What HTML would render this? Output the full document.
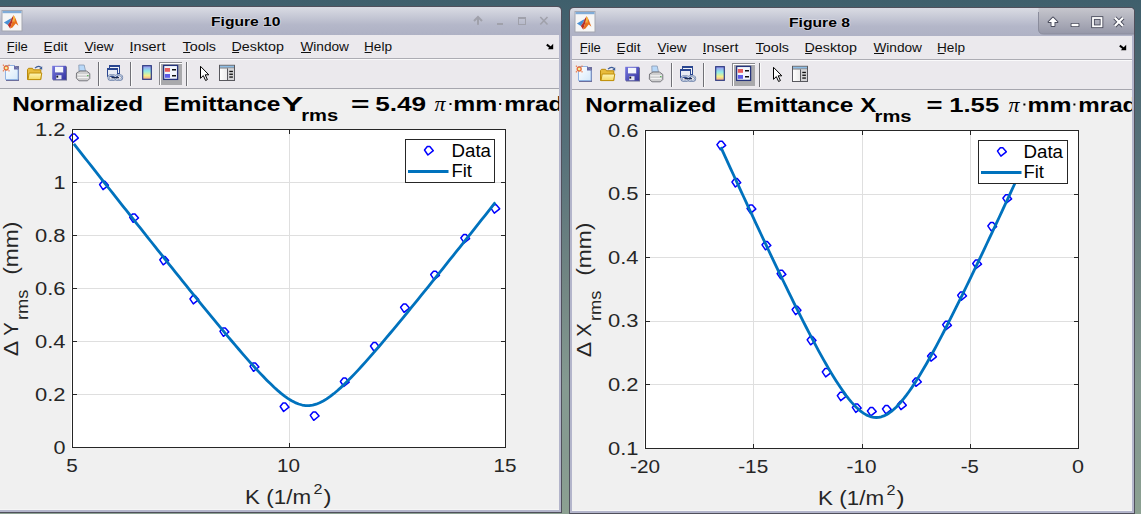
<!DOCTYPE html><html><head><meta charset="utf-8"><style>html,body{margin:0;padding:0;width:1141px;height:514px;overflow:hidden;background:#5a7a78;}svg{display:block}</style></head><body>
<svg width="1141" height="514" viewBox="0 0 1141 514">
<defs><linearGradient id="desk" x1="0" y1="0" x2="0" y2="1"><stop offset="0" stop-color="#3f5f6c"/><stop offset="0.12" stop-color="#4a6670"/><stop offset="0.3" stop-color="#57717a"/><stop offset="0.55" stop-color="#728683"/><stop offset="0.75" stop-color="#859a91"/><stop offset="0.88" stop-color="#869a90"/><stop offset="1" stop-color="#8ca192"/></linearGradient></defs>
<rect width="1141" height="514" fill="url(#desk)"/>
<path d="M-10 513 L-10 11 Q-10 6 -5 6 L557 6 Q562 6 562 11 L562 513 Z" fill="#50505c"/>
<defs><linearGradient id="tg0" x1="0" y1="0" x2="0" y2="1"><stop offset="0" stop-color="#dadbe4"/><stop offset="0.08" stop-color="#d5d7e0"/><stop offset="0.62" stop-color="#b4b7c9"/><stop offset="1" stop-color="#aeb1c4"/></linearGradient></defs>
<path d="M-9 36 L-9 11 Q-9 7 -5 7 L557 7 Q561 7 561 11 L561 36 Z" fill="url(#tg0)"/>
<rect x="-9" y="35" width="570" height="477" fill="#b3b5cb"/>
<rect x="-10" y="35" width="569" height="54" fill="#ebe9ed"/>
<rect x="-10" y="58" width="569" height="1" fill="#acacb3"/>
<rect x="-10" y="59" width="569" height="1" fill="#fafafb"/>
<rect x="-10" y="88" width="569" height="1" fill="#a6a6ae"/>
<rect x="-10" y="89" width="569" height="421" fill="#f0f0f0"/>
<rect x="-10" y="509" width="569" height="1" fill="#f6f6f6"/>
<g transform="translate(1.5,10)">
<rect x="0.5" y="0.5" width="20" height="20.5" fill="#f6f6f6" stroke="#a4a6b0" stroke-width="1"/>
<rect x="1" y="1" width="19" height="2.2" fill="#80acd8"/>
<path d="M2.4 12.6 L7.5 9.6 L10.2 7.9 L8.8 11.5 L6.3 14.9 Z" fill="#4a90d4"/>
<path d="M6.3 14.9 L8.8 11.5 L10.2 7.9 L12.1 5.2 L11.2 10.5 L8.6 18.4 Z" fill="#b8302a"/>
<path d="M12.1 5.2 L14.2 8.8 L16.9 15.8 L14.2 13.6 L11 17.6 L8.6 18.4 L11.2 10.5 Z" fill="#e8701e"/>
<path d="M12.1 5.2 L13.6 7.8 L12.8 12.4 L11.2 10.5 Z" fill="#f6b840"/>
</g>
<text x="211" y="25.5" font-family='"Liberation Sans", sans-serif' font-size="12.2" font-weight="bold" fill="#000" textLength="69.5" lengthAdjust="spacingAndGlyphs" style="paint-order:stroke" stroke="rgba(255,255,255,0.35)" stroke-width="1.5">Figure 10</text>
<path d="M474 21 L478 17 L482 21" fill="none" stroke="#a0a1ab" stroke-width="2"/>
<rect x="477" y="18" width="2" height="6.8" fill="#a0a1ab"/>
<rect x="497" y="23" width="6" height="2" fill="#a0a1ab"/>
<rect x="518.5" y="17.5" width="7" height="7" fill="none" stroke="#a0a1ab" stroke-width="1"/>
<rect x="518" y="17" width="8" height="2" fill="#a0a1ab"/>
<path d="M540.3 17 L547.5 24.5 M547.5 17 L540.3 24.5" stroke="#a0a1ab" stroke-width="1.6"/>
<text x="6.800000000000001" y="50.9" font-family='"Liberation Sans", sans-serif' font-size="12.3" font-weight="normal" text-anchor="start" fill="#101010" textLength="21.0" lengthAdjust="spacingAndGlyphs" >File</text>
<rect x="7.4" y="52" width="7" height="1" fill="#101010"/>
<text x="43.6" y="50.9" font-family='"Liberation Sans", sans-serif' font-size="12.3" font-weight="normal" text-anchor="start" fill="#101010" textLength="24.0" lengthAdjust="spacingAndGlyphs" >Edit</text>
<rect x="44.2" y="52" width="7" height="1" fill="#101010"/>
<text x="84.4" y="50.9" font-family='"Liberation Sans", sans-serif' font-size="12.3" font-weight="normal" text-anchor="start" fill="#101010" textLength="29.2" lengthAdjust="spacingAndGlyphs" >View</text>
<rect x="85" y="52" width="7" height="1" fill="#101010"/>
<text x="129.4" y="50.9" font-family='"Liberation Sans", sans-serif' font-size="12.3" font-weight="normal" text-anchor="start" fill="#101010" textLength="36.0" lengthAdjust="spacingAndGlyphs" >Insert</text>
<rect x="130" y="52" width="3" height="1" fill="#101010"/>
<text x="182.5" y="50.9" font-family='"Liberation Sans", sans-serif' font-size="12.3" font-weight="normal" text-anchor="start" fill="#101010" textLength="33.5" lengthAdjust="spacingAndGlyphs" >Tools</text>
<rect x="183.1" y="52" width="7" height="1" fill="#101010"/>
<text x="231.5" y="50.9" font-family='"Liberation Sans", sans-serif' font-size="12.3" font-weight="normal" text-anchor="start" fill="#101010" textLength="52.4" lengthAdjust="spacingAndGlyphs" >Desktop</text>
<rect x="232.1" y="52" width="7" height="1" fill="#101010"/>
<text x="300.4" y="50.9" font-family='"Liberation Sans", sans-serif' font-size="12.3" font-weight="normal" text-anchor="start" fill="#101010" textLength="48.6" lengthAdjust="spacingAndGlyphs" >Window</text>
<rect x="301" y="52" width="10" height="1" fill="#101010"/>
<text x="364.0" y="50.9" font-family='"Liberation Sans", sans-serif' font-size="12.3" font-weight="normal" text-anchor="start" fill="#101010" textLength="28.0" lengthAdjust="spacingAndGlyphs" >Help</text>
<rect x="364.6" y="52" width="7" height="1" fill="#101010"/>
<path d="M546.8 44.6 L551.5 48.3" stroke="#000" stroke-width="2"/><path d="M553.2 43.8 L553.2 49.2 L547.8 49.2 Z" fill="#000"/>
<g transform="translate(0,0)">
<defs><linearGradient id="pg" x1="0" y1="0" x2="1" y2="1"><stop offset="0" stop-color="#ffffff"/><stop offset="1" stop-color="#d4e8fa"/></linearGradient><linearGradient id="fg" x1="0" y1="0" x2="0" y2="1"><stop offset="0" stop-color="#fff6b8"/><stop offset="1" stop-color="#f4d860"/></linearGradient><linearGradient id="flg" x1="0" y1="0" x2="1" y2="1"><stop offset="0" stop-color="#7878e0"/><stop offset="1" stop-color="#3434a0"/></linearGradient><linearGradient id="cbg" x1="0" y1="0" x2="0" y2="1"><stop offset="0" stop-color="#9890f0"/><stop offset="0.4" stop-color="#90ece8"/><stop offset="0.72" stop-color="#f4f088"/><stop offset="1" stop-color="#f8a890"/></linearGradient><linearGradient id="peg" x1="0" y1="0" x2="1" y2="0"><stop offset="0" stop-color="#ffffff"/><stop offset="1" stop-color="#d8d8d8"/></linearGradient></defs>
<rect x="6" y="66" width="13" height="15" fill="#6c6e9c"/>
<path d="M5.5 65.5 L14 65.5 L18 69.5 L18 79.5 L5.5 79.5 Z" fill="url(#pg)" stroke="#90b4e4" stroke-width="1"/>
<path d="M14 65 L18.5 69.5 L14 69.5 Z" fill="#6a6aa8"/>
<circle cx="6.2" cy="68" r="2" fill="#f0f09a" stroke="#e86e3c" stroke-width="1.3"/>
<g fill="#e86e3c"><rect x="2.8" y="64.6" width="1.2" height="1.2"/><rect x="8.4" y="64.6" width="1.2" height="1.2"/><rect x="2.8" y="70.2" width="1.2" height="1.2"/><rect x="8.4" y="70.2" width="1.2" height="1.2"/></g>
<path d="M27.5 79.5 L27.5 69.5 L28.5 68.3 L32.5 68.3 L33.5 69.8 L40.8 69.8 L40.8 79.5 Z" fill="#e8bc3c" stroke="#b8880c" stroke-width="1"/>
<path d="M28 79.6 L29.2 73 L41.8 73 L40.6 79.6 Z" fill="url(#fg)" stroke="#c0900c" stroke-width="1"/>
<path d="M35 68.2 Q38 65.2 40.8 67.2" fill="none" stroke="#3c5c98" stroke-width="1.2"/><path d="M39.3 68.6 L42.2 66.2 L42.2 69.8 Z" fill="#3c5c98"/>
<rect x="53" y="66.5" width="14" height="14" fill="#4a4c7a" opacity="0.8"/>
<rect x="52.2" y="65.8" width="13.8" height="13.8" fill="url(#flg)"/>
<rect x="55" y="66.8" width="8.2" height="6.3" fill="#f4f6fc"/><rect x="55" y="72.5" width="8.2" height="0.8" fill="#3838a0"/>
<rect x="56.2" y="75.2" width="5.3" height="4" fill="#e8e8f0"/><rect x="56.4" y="75.6" width="1.8" height="2" fill="#101020"/>
<path d="M78.8 65 L84.2 65 L85.5 71 L79 71 Z" fill="#b8d8f8" stroke="#8898b0" stroke-width="0.8"/>
<path d="M76.5 73 L80 71 L86.5 71 L89.8 73.5 L89.8 78.5 L87.5 80.8 L79 80.8 L76.3 78.2 Z" fill="#cfcfd0" stroke="#6e6e74" stroke-width="0.9"/>
<path d="M77.5 74.8 L88.8 74.8 M77.5 77.6 L88.6 77.6" stroke="#f8f8f8" stroke-width="1"/><rect x="87.2" y="75" width="1.2" height="1.2" fill="#40b040"/>
<rect x="98.0" y="62" width="1" height="24" fill="#707076"/><rect x="99.0" y="62" width="1" height="24" fill="#fafafa"/>
<rect x="130.0" y="62" width="1" height="24" fill="#707076"/><rect x="131.0" y="62" width="1" height="24" fill="#fafafa"/>
<rect x="186.0" y="62" width="1" height="24" fill="#707076"/><rect x="187.0" y="62" width="1" height="24" fill="#fafafa"/>
<rect x="109.5" y="65.5" width="10" height="8" fill="#f2f4f8" stroke="#2a4690" stroke-width="1"/><rect x="109" y="65" width="11" height="2" fill="#2a4690"/>
<rect x="107.5" y="68.5" width="10" height="8" fill="#e8ecf4" stroke="#2a4690" stroke-width="1"/><rect x="107" y="68" width="11" height="2" fill="#2a4690"/>
<ellipse cx="112" cy="77.4" rx="3.6" ry="2.5" fill="none" stroke="#6c80a8" stroke-width="2"/><ellipse cx="118.6" cy="77.4" rx="3.6" ry="2.5" fill="none" stroke="#6c80a8" stroke-width="2"/>
<ellipse cx="112" cy="77.4" rx="3.6" ry="2.5" fill="none" stroke="#e4ecf8" stroke-width="0.7"/><ellipse cx="118.6" cy="77.4" rx="3.6" ry="2.5" fill="none" stroke="#e4ecf8" stroke-width="0.7"/>
<path d="M111.5 77.6 L119 77.6" stroke="#1a2a50" stroke-width="1.3"/>
<rect x="142.7" y="65.7" width="8.6" height="13.6" fill="url(#cbg)" stroke="#2c3880" stroke-width="1.2"/>
<rect x="159" y="62" width="23" height="23" fill="#ffffff"/>
<rect x="159" y="62" width="23" height="1" fill="#8a8a8e"/><rect x="159" y="62" width="1" height="23" fill="#8a8a8e"/>
<rect x="161" y="64" width="21" height="21" fill="#a9a9ac"/>
<rect x="163.6" y="65.4" width="14" height="14" fill="#f2f6fc" stroke="#26347c" stroke-width="1.3"/>
<rect x="164.8" y="68" width="5.2" height="3.8" fill="#e85c5c"/><rect x="172" y="69" width="4" height="1.5" fill="#101010"/>
<rect x="164.8" y="74" width="5.2" height="3.8" fill="#5c5ce8"/><rect x="172" y="75" width="4" height="1.5" fill="#101010"/>
<path d="M200.5 66.3 L200.5 78.3 L203.3 75.6 L205.6 80.5 L207.4 79.6 L205.2 74.8 L208.8 74.8 Z" fill="#fff" stroke="#000" stroke-width="1"/>
<rect x="219.5" y="65.3" width="15" height="15.2" fill="url(#peg)" stroke="#58585e" stroke-width="1"/>
<rect x="220" y="65.8" width="14" height="1.8" fill="#8cbce4"/><rect x="220" y="67.6" width="14" height="0.8" fill="#58585e"/>
<rect x="227.5" y="68.4" width="6.5" height="11.6" fill="#d4d4d6"/><rect x="227" y="68.4" width="1" height="12" fill="#58585e"/>
<rect x="229.3" y="70.8" width="3.6" height="1.3" fill="#101010"/><rect x="229.3" y="73.6" width="3.6" height="1.3" fill="#101010"/><rect x="229.3" y="76.4" width="3.6" height="1.3" fill="#101010"/>
</g>
<defs><clipPath id="clip0"><rect x="0" y="89" width="559" height="421"/></clipPath></defs>
<g clip-path="url(#clip0)">
<rect x="71" y="129" width="435" height="319" fill="#fff"/>
<path d="M289.5 134 L289.5 443" stroke="#dfdfdf" stroke-width="1" shape-rendering="crispEdges"/>
<path d="M77 394.5 L501 394.5" stroke="#dfdfdf" stroke-width="1" shape-rendering="crispEdges"/>
<path d="M77 341.5 L501 341.5" stroke="#dfdfdf" stroke-width="1" shape-rendering="crispEdges"/>
<path d="M77 288.5 L501 288.5" stroke="#dfdfdf" stroke-width="1" shape-rendering="crispEdges"/>
<path d="M77 235.5 L501 235.5" stroke="#dfdfdf" stroke-width="1" shape-rendering="crispEdges"/>
<path d="M77 182.5 L501 182.5" stroke="#dfdfdf" stroke-width="1" shape-rendering="crispEdges"/>
<path d="M72.30 134.00 L74.80 134.00 L78.30 138.10 L72.90 142.40 L69.50 137.40 Z" fill="none" stroke="#0000ff" stroke-width="1.5" stroke-linejoin="round"/>
<path d="M102.40 181.20 L104.90 181.20 L108.40 185.30 L103.00 189.60 L99.60 184.60 Z" fill="none" stroke="#0000ff" stroke-width="1.5" stroke-linejoin="round"/>
<path d="M132.50 213.90 L135.00 213.90 L138.50 218.00 L133.10 222.30 L129.70 217.30 Z" fill="none" stroke="#0000ff" stroke-width="1.5" stroke-linejoin="round"/>
<path d="M162.60 256.40 L165.10 256.40 L168.60 260.50 L163.20 264.80 L159.80 259.80 Z" fill="none" stroke="#0000ff" stroke-width="1.5" stroke-linejoin="round"/>
<path d="M192.70 295.50 L195.20 295.50 L198.70 299.60 L193.30 303.90 L189.90 298.90 Z" fill="none" stroke="#0000ff" stroke-width="1.5" stroke-linejoin="round"/>
<path d="M222.80 327.90 L225.30 327.90 L228.80 332.00 L223.40 336.30 L220.00 331.30 Z" fill="none" stroke="#0000ff" stroke-width="1.5" stroke-linejoin="round"/>
<path d="M252.90 362.90 L255.40 362.90 L258.90 367.00 L253.50 371.30 L250.10 366.30 Z" fill="none" stroke="#0000ff" stroke-width="1.5" stroke-linejoin="round"/>
<path d="M283.00 403.10 L285.50 403.10 L289.00 407.20 L283.60 411.50 L280.20 406.50 Z" fill="none" stroke="#0000ff" stroke-width="1.5" stroke-linejoin="round"/>
<path d="M313.10 411.90 L315.60 411.90 L319.10 416.00 L313.70 420.30 L310.30 415.30 Z" fill="none" stroke="#0000ff" stroke-width="1.5" stroke-linejoin="round"/>
<path d="M343.20 378.10 L345.70 378.10 L349.20 382.20 L343.80 386.50 L340.40 381.50 Z" fill="none" stroke="#0000ff" stroke-width="1.5" stroke-linejoin="round"/>
<path d="M373.30 342.60 L375.80 342.60 L379.30 346.70 L373.90 351.00 L370.50 346.00 Z" fill="none" stroke="#0000ff" stroke-width="1.5" stroke-linejoin="round"/>
<path d="M403.40 303.90 L405.90 303.90 L409.40 308.00 L404.00 312.30 L400.60 307.30 Z" fill="none" stroke="#0000ff" stroke-width="1.5" stroke-linejoin="round"/>
<path d="M433.50 271.20 L436.00 271.20 L439.50 275.30 L434.10 279.60 L430.70 274.60 Z" fill="none" stroke="#0000ff" stroke-width="1.5" stroke-linejoin="round"/>
<path d="M463.60 234.50 L466.10 234.50 L469.60 238.60 L464.20 242.90 L460.80 237.90 Z" fill="none" stroke="#0000ff" stroke-width="1.5" stroke-linejoin="round"/>
<path d="M493.70 204.70 L496.20 204.70 L499.70 208.80 L494.30 213.10 L490.90 208.10 Z" fill="none" stroke="#0000ff" stroke-width="1.5" stroke-linejoin="round"/>
<path d="M73.90 143.89 L77.41 148.36 L80.92 152.83 L84.43 157.29 L87.95 161.75 L91.46 166.22 L94.97 170.68 L98.48 175.14 L101.99 179.59 L105.50 184.05 L109.02 188.50 L112.53 192.95 L116.04 197.40 L119.55 201.85 L123.06 206.30 L126.58 210.74 L130.09 215.18 L133.60 219.61 L137.11 224.05 L140.62 228.48 L144.13 232.91 L147.65 237.33 L151.16 241.75 L154.67 246.17 L158.18 250.58 L161.69 254.98 L165.20 259.39 L168.72 263.78 L172.23 268.17 L175.74 272.56 L179.25 276.94 L182.76 281.31 L186.27 285.67 L189.78 290.03 L193.30 294.37 L196.81 298.71 L200.32 303.04 L203.83 307.35 L207.34 311.65 L210.85 315.94 L214.37 320.21 L217.88 324.47 L221.39 328.70 L224.90 332.92 L228.41 337.11 L231.93 341.27 L235.44 345.41 L238.95 349.51 L242.46 353.57 L245.97 357.60 L249.48 361.57 L253.00 365.48 L256.51 369.34 L260.02 373.11 L263.53 376.81 L267.04 380.40 L270.55 383.87 L274.07 387.20 L277.58 390.37 L281.09 393.35 L284.60 396.10 L288.11 398.58 L291.62 400.76 L295.13 402.59 L298.65 404.02 L302.16 405.01 L305.67 405.53 L309.18 405.56 L312.69 405.10 L316.21 404.18 L319.72 402.81 L323.23 401.03 L326.74 398.90 L330.25 396.45 L333.76 393.73 L337.28 390.79 L340.79 387.64 L344.30 384.33 L347.81 380.87 L351.32 377.30 L354.83 373.62 L358.35 369.86 L361.86 366.01 L365.37 362.10 L368.88 358.14 L372.39 354.12 L375.90 350.07 L379.42 345.97 L382.93 341.84 L386.44 337.68 L389.95 333.49 L393.46 329.28 L396.97 325.04 L400.49 320.79 L404.00 316.52 L407.51 312.24 L411.02 307.94 L414.53 303.62 L418.04 299.30 L421.56 294.97 L425.07 290.62 L428.58 286.27 L432.09 281.90 L435.60 277.53 L439.11 273.16 L442.63 268.77 L446.14 264.38 L449.65 259.98 L453.16 255.58 L456.67 251.18 L460.18 246.77 L463.70 242.35 L467.21 237.93 L470.72 233.51 L474.23 229.08 L477.74 224.65 L481.25 220.22 L484.77 215.78 L488.28 211.34 L491.79 206.90 L495.30 202.46" fill="none" stroke="#0072bd" stroke-width="2.8" stroke-linejoin="round"/>
<path d="M72.5 129.5 L505.5 129.5 L505.5 447.5 L72.5 447.5 Z" fill="none" stroke="#262626" stroke-width="1" shape-rendering="crispEdges"/>
<path d="M72.5 447 L72.5 443 M72.5 130 L72.5 134" stroke="#262626" stroke-width="1" shape-rendering="crispEdges"/>
<path d="M289.5 447 L289.5 443 M289.5 130 L289.5 134" stroke="#262626" stroke-width="1" shape-rendering="crispEdges"/>
<path d="M505.5 447 L505.5 443 M505.5 130 L505.5 134" stroke="#262626" stroke-width="1" shape-rendering="crispEdges"/>
<path d="M73 447.5 L77 447.5 M505 447.5 L501 447.5" stroke="#262626" stroke-width="1" shape-rendering="crispEdges"/>
<path d="M73 394.5 L77 394.5 M505 394.5 L501 394.5" stroke="#262626" stroke-width="1" shape-rendering="crispEdges"/>
<path d="M73 341.5 L77 341.5 M505 341.5 L501 341.5" stroke="#262626" stroke-width="1" shape-rendering="crispEdges"/>
<path d="M73 288.5 L77 288.5 M505 288.5 L501 288.5" stroke="#262626" stroke-width="1" shape-rendering="crispEdges"/>
<path d="M73 235.5 L77 235.5 M505 235.5 L501 235.5" stroke="#262626" stroke-width="1" shape-rendering="crispEdges"/>
<path d="M73 182.5 L77 182.5 M505 182.5 L501 182.5" stroke="#262626" stroke-width="1" shape-rendering="crispEdges"/>
<path d="M73 129.5 L77 129.5 M505 129.5 L501 129.5" stroke="#262626" stroke-width="1" shape-rendering="crispEdges"/>
<text x="72.0" y="472" font-family='"Liberation Sans", sans-serif' font-size="18.3" font-weight="normal" text-anchor="middle" fill="#262626" textLength="11.5" lengthAdjust="spacingAndGlyphs" >5</text>
<text x="288.5" y="472" font-family='"Liberation Sans", sans-serif' font-size="18.3" font-weight="normal" text-anchor="middle" fill="#262626" textLength="23" lengthAdjust="spacingAndGlyphs" >10</text>
<text x="505.0" y="472" font-family='"Liberation Sans", sans-serif' font-size="18.3" font-weight="normal" text-anchor="middle" fill="#262626" textLength="23" lengthAdjust="spacingAndGlyphs" >15</text>
<text x="65.5" y="453.5" font-family='"Liberation Sans", sans-serif' font-size="18.3" font-weight="normal" text-anchor="end" fill="#262626" textLength="12" lengthAdjust="spacingAndGlyphs" >0</text>
<text x="65.5" y="400.5" font-family='"Liberation Sans", sans-serif' font-size="18.3" font-weight="normal" text-anchor="end" fill="#262626" textLength="30.5" lengthAdjust="spacingAndGlyphs" >0.2</text>
<text x="65.5" y="347.5" font-family='"Liberation Sans", sans-serif' font-size="18.3" font-weight="normal" text-anchor="end" fill="#262626" textLength="30.5" lengthAdjust="spacingAndGlyphs" >0.4</text>
<text x="65.5" y="294.5" font-family='"Liberation Sans", sans-serif' font-size="18.3" font-weight="normal" text-anchor="end" fill="#262626" textLength="30.5" lengthAdjust="spacingAndGlyphs" >0.6</text>
<text x="65.5" y="241.5" font-family='"Liberation Sans", sans-serif' font-size="18.3" font-weight="normal" text-anchor="end" fill="#262626" textLength="30.5" lengthAdjust="spacingAndGlyphs" >0.8</text>
<text x="65.5" y="188.5" font-family='"Liberation Sans", sans-serif' font-size="18.3" font-weight="normal" text-anchor="end" fill="#262626" textLength="12" lengthAdjust="spacingAndGlyphs" >1</text>
<text x="65.5" y="135.5" font-family='"Liberation Sans", sans-serif' font-size="18.3" font-weight="normal" text-anchor="end" fill="#262626" textLength="30.5" lengthAdjust="spacingAndGlyphs" >1.2</text>
<rect x="405.5" y="139.5" width="89" height="43" fill="#fff" stroke="#262626" stroke-width="1" shape-rendering="crispEdges"/>
<path d="M427.30 146.60 L429.80 146.60 L433.30 150.70 L427.90 155.00 L424.50 150.00 Z" fill="none" stroke="#0000ff" stroke-width="1.5" stroke-linejoin="round"/>
<path d="M408 171.5 L448.5 171.5" stroke="#0072bd" stroke-width="3"/>
<text x="451.5" y="157.1" font-family='"Liberation Sans", sans-serif' font-size="17.5" font-weight="normal" text-anchor="start" fill="#000" textLength="39.5" lengthAdjust="spacingAndGlyphs" >Data</text>
<text x="451.5" y="176.7" font-family='"Liberation Sans", sans-serif' font-size="17.5" font-weight="normal" text-anchor="start" fill="#000" textLength="20.5" lengthAdjust="spacingAndGlyphs" >Fit</text>
<text x="12.2" y="111" font-family='"Liberation Sans", sans-serif' font-size="20.5" font-weight="bold" text-anchor="start" fill="#000" textLength="131" lengthAdjust="spacingAndGlyphs" >Normalized</text>
<text x="163.4" y="111" font-family='"Liberation Sans", sans-serif' font-size="20.5" font-weight="bold" text-anchor="start" fill="#000" textLength="117" lengthAdjust="spacingAndGlyphs" >Emittance</text>
<text x="281.5" y="111" font-family='"Liberation Sans", sans-serif' font-size="20.5" font-weight="bold" text-anchor="start" fill="#000" textLength="22" lengthAdjust="spacingAndGlyphs" >Y</text>
<text x="301.2" y="121" font-family='"Liberation Sans", sans-serif' font-size="16.5" font-weight="bold" text-anchor="start" fill="#000" textLength="37" lengthAdjust="spacingAndGlyphs" >rms</text>
<text x="351" y="111" font-family='"Liberation Sans", sans-serif' font-size="20.5" font-weight="bold" text-anchor="start" fill="#000" textLength="18.5" lengthAdjust="spacingAndGlyphs" >=</text>
<text x="375.2" y="111" font-family='"Liberation Sans", sans-serif' font-size="20.5" font-weight="bold" text-anchor="start" fill="#000" textLength="51" lengthAdjust="spacingAndGlyphs" >5.49</text>
<text x="434.5" y="111" font-family='"Liberation Serif", serif' font-size="20" font-weight="normal" text-anchor="start" fill="#000" textLength="11" lengthAdjust="spacingAndGlyphs" font-style="italic">π</text>
<rect x="449.5" y="103" width="2" height="2" fill="#000"/>
<text x="453.2" y="111" font-family='"Liberation Sans", sans-serif' font-size="20.5" font-weight="bold" text-anchor="start" fill="#000" textLength="44" lengthAdjust="spacingAndGlyphs" >mm</text>
<rect x="499.2" y="103" width="2" height="2" fill="#000"/>
<text x="504.2" y="111" font-family='"Liberation Sans", sans-serif' font-size="20.5" font-weight="bold" text-anchor="start" fill="#000" textLength="59" lengthAdjust="spacingAndGlyphs" >mrad</text>
<text x="245.1" y="504.4" font-family='"Liberation Sans", sans-serif' font-size="20" font-weight="normal" text-anchor="start" fill="#262626" textLength="66" lengthAdjust="spacingAndGlyphs" >K (1/m</text>
<text x="313.5" y="494.3" font-family='"Liberation Sans", sans-serif' font-size="14.5" font-weight="normal" text-anchor="start" fill="#262626" textLength="9" lengthAdjust="spacingAndGlyphs" >2</text>
<text x="323.5" y="504.4" font-family='"Liberation Sans", sans-serif' font-size="20.5" font-weight="normal" text-anchor="start" fill="#262626" textLength="8" lengthAdjust="spacingAndGlyphs" >)</text>
<g transform="translate(18.4,356.3) rotate(-90)">
<text x="0" y="0" font-family='"Liberation Sans", sans-serif' font-size="20" font-weight="normal" text-anchor="start" fill="#262626" textLength="15.5" lengthAdjust="spacingAndGlyphs" >Δ</text>
<text x="20.5" y="0" font-family='"Liberation Sans", sans-serif' font-size="20" font-weight="normal" text-anchor="start" fill="#262626" textLength="13.5" lengthAdjust="spacingAndGlyphs" >Y</text>
<text x="36.2" y="10" font-family='"Liberation Sans", sans-serif' font-size="16.5" font-weight="normal" text-anchor="start" fill="#262626" textLength="30.5" lengthAdjust="spacingAndGlyphs" >rms</text>
<text x="81.5" y="0" font-family='"Liberation Sans", sans-serif' font-size="20.5" font-weight="normal" text-anchor="start" fill="#262626" textLength="53" lengthAdjust="spacingAndGlyphs" >(mm)</text>
</g>
</g>
<path d="M569 514 L569 12 Q569 7 574 7 L1130 7 Q1135 7 1135 12 L1135 514 Z" fill="#50505c"/>
<defs><linearGradient id="tg573" x1="0" y1="0" x2="0" y2="1"><stop offset="0" stop-color="#dadbe4"/><stop offset="0.08" stop-color="#d5d7e0"/><stop offset="0.62" stop-color="#b4b7c9"/><stop offset="1" stop-color="#aeb1c4"/></linearGradient></defs>
<path d="M570 37 L570 12 Q570 8 574 8 L1130 8 Q1134 8 1134 12 L1134 37 Z" fill="url(#tg573)"/>
<rect x="570" y="36" width="564" height="477" fill="#b3b5cb"/>
<rect x="572" y="36" width="560" height="54" fill="#ebe9ed"/>
<rect x="572" y="59" width="560" height="1" fill="#acacb3"/>
<rect x="572" y="60" width="560" height="1" fill="#fafafb"/>
<rect x="572" y="89" width="560" height="1" fill="#a6a6ae"/>
<rect x="572" y="90" width="560" height="421" fill="#f0f0f0"/>
<rect x="572" y="510" width="560" height="1" fill="#f6f6f6"/>
<g transform="translate(574.5,11)">
<rect x="0.5" y="0.5" width="20" height="20.5" fill="#f6f6f6" stroke="#a4a6b0" stroke-width="1"/>
<rect x="1" y="1" width="19" height="2.2" fill="#80acd8"/>
<path d="M2.4 12.6 L7.5 9.6 L10.2 7.9 L8.8 11.5 L6.3 14.9 Z" fill="#4a90d4"/>
<path d="M6.3 14.9 L8.8 11.5 L10.2 7.9 L12.1 5.2 L11.2 10.5 L8.6 18.4 Z" fill="#b8302a"/>
<path d="M12.1 5.2 L14.2 8.8 L16.9 15.8 L14.2 13.6 L11 17.6 L8.6 18.4 L11.2 10.5 Z" fill="#e8701e"/>
<path d="M12.1 5.2 L13.6 7.8 L12.8 12.4 L11.2 10.5 Z" fill="#f6b840"/>
</g>
<text x="789" y="26.5" font-family='"Liberation Sans", sans-serif' font-size="12.2" font-weight="bold" fill="#000" textLength="61" lengthAdjust="spacingAndGlyphs" style="paint-order:stroke" stroke="rgba(255,255,255,0.35)" stroke-width="1.5">Figure 8</text>
<defs><linearGradient id="cg" x1="0" y1="0" x2="0" y2="1"><stop offset="0" stop-color="#c6c6cd"/><stop offset="1" stop-color="#9597a8"/></linearGradient></defs>
<path d="M1038.5 8 L1130 8 Q1134 8 1134 12 L1134 34 L1043.5 34 Q1038.5 34 1038.5 29 Z" fill="url(#cg)"/>
<path d="M1038.5 12 L1038.5 29 Q1038.5 34 1043.5 34 L1134 34" fill="none" stroke="#8a8c9c" stroke-width="1"/>
<path d="M1053 17.5 L1057.5 22 L1054.5 22 L1054.5 26 L1051.5 26 L1051.5 22 L1048.5 22 Z" fill="#4a4c5c" stroke="#4a4c5c" stroke-width="1.8" stroke-linejoin="round"/>
<rect x="1071.5" y="23.8" width="7" height="2.4" fill="#4a4c5c" stroke="#4a4c5c" stroke-width="1.8" stroke-linejoin="round"/>
<rect x="1093" y="18" width="8.5" height="8.3" fill="none" stroke="#4a4c5c" stroke-width="3.6"/>
<path d="M1114.8 17.8 L1123 26 M1123 17.8 L1114.8 26" stroke="#4a4c5c" stroke-width="4"/>
<path d="M1053 17.5 L1057.5 22 L1054.5 22 L1054.5 26 L1051.5 26 L1051.5 22 L1048.5 22 Z" fill="#ffffff"/>
<rect x="1071.5" y="23.8" width="7" height="2.4" fill="#ffffff"/>
<rect x="1093" y="18" width="8.5" height="8.3" fill="none" stroke="#fff" stroke-width="1.8"/>
<path d="M1114.8 17.8 L1123 26 M1123 17.8 L1114.8 26" stroke="#fff" stroke-width="2.2"/>
<text x="579.8" y="51.9" font-family='"Liberation Sans", sans-serif' font-size="12.3" font-weight="normal" text-anchor="start" fill="#101010" textLength="21.0" lengthAdjust="spacingAndGlyphs" >File</text>
<rect x="580.4" y="53" width="7" height="1" fill="#101010"/>
<text x="616.6" y="51.9" font-family='"Liberation Sans", sans-serif' font-size="12.3" font-weight="normal" text-anchor="start" fill="#101010" textLength="24.0" lengthAdjust="spacingAndGlyphs" >Edit</text>
<rect x="617.2" y="53" width="7" height="1" fill="#101010"/>
<text x="657.4" y="51.9" font-family='"Liberation Sans", sans-serif' font-size="12.3" font-weight="normal" text-anchor="start" fill="#101010" textLength="29.2" lengthAdjust="spacingAndGlyphs" >View</text>
<rect x="658" y="53" width="7" height="1" fill="#101010"/>
<text x="702.4" y="51.9" font-family='"Liberation Sans", sans-serif' font-size="12.3" font-weight="normal" text-anchor="start" fill="#101010" textLength="36.0" lengthAdjust="spacingAndGlyphs" >Insert</text>
<rect x="703" y="53" width="3" height="1" fill="#101010"/>
<text x="755.5" y="51.9" font-family='"Liberation Sans", sans-serif' font-size="12.3" font-weight="normal" text-anchor="start" fill="#101010" textLength="33.5" lengthAdjust="spacingAndGlyphs" >Tools</text>
<rect x="756.1" y="53" width="7" height="1" fill="#101010"/>
<text x="804.5" y="51.9" font-family='"Liberation Sans", sans-serif' font-size="12.3" font-weight="normal" text-anchor="start" fill="#101010" textLength="52.4" lengthAdjust="spacingAndGlyphs" >Desktop</text>
<rect x="805.1" y="53" width="7" height="1" fill="#101010"/>
<text x="873.4" y="51.9" font-family='"Liberation Sans", sans-serif' font-size="12.3" font-weight="normal" text-anchor="start" fill="#101010" textLength="48.6" lengthAdjust="spacingAndGlyphs" >Window</text>
<rect x="874" y="53" width="10" height="1" fill="#101010"/>
<text x="937.0" y="51.9" font-family='"Liberation Sans", sans-serif' font-size="12.3" font-weight="normal" text-anchor="start" fill="#101010" textLength="28.0" lengthAdjust="spacingAndGlyphs" >Help</text>
<rect x="937.6" y="53" width="7" height="1" fill="#101010"/>
<path d="M1119.8 45.6 L1124.5 49.3" stroke="#000" stroke-width="2"/><path d="M1126.2 44.8 L1126.2 50.2 L1120.8 50.2 Z" fill="#000"/>
<g transform="translate(573,1)">
<rect x="6" y="66" width="13" height="15" fill="#6c6e9c"/>
<path d="M5.5 65.5 L14 65.5 L18 69.5 L18 79.5 L5.5 79.5 Z" fill="url(#pg)" stroke="#90b4e4" stroke-width="1"/>
<path d="M14 65 L18.5 69.5 L14 69.5 Z" fill="#6a6aa8"/>
<circle cx="6.2" cy="68" r="2" fill="#f0f09a" stroke="#e86e3c" stroke-width="1.3"/>
<g fill="#e86e3c"><rect x="2.8" y="64.6" width="1.2" height="1.2"/><rect x="8.4" y="64.6" width="1.2" height="1.2"/><rect x="2.8" y="70.2" width="1.2" height="1.2"/><rect x="8.4" y="70.2" width="1.2" height="1.2"/></g>
<path d="M27.5 79.5 L27.5 69.5 L28.5 68.3 L32.5 68.3 L33.5 69.8 L40.8 69.8 L40.8 79.5 Z" fill="#e8bc3c" stroke="#b8880c" stroke-width="1"/>
<path d="M28 79.6 L29.2 73 L41.8 73 L40.6 79.6 Z" fill="url(#fg)" stroke="#c0900c" stroke-width="1"/>
<path d="M35 68.2 Q38 65.2 40.8 67.2" fill="none" stroke="#3c5c98" stroke-width="1.2"/><path d="M39.3 68.6 L42.2 66.2 L42.2 69.8 Z" fill="#3c5c98"/>
<rect x="53" y="66.5" width="14" height="14" fill="#4a4c7a" opacity="0.8"/>
<rect x="52.2" y="65.8" width="13.8" height="13.8" fill="url(#flg)"/>
<rect x="55" y="66.8" width="8.2" height="6.3" fill="#f4f6fc"/><rect x="55" y="72.5" width="8.2" height="0.8" fill="#3838a0"/>
<rect x="56.2" y="75.2" width="5.3" height="4" fill="#e8e8f0"/><rect x="56.4" y="75.6" width="1.8" height="2" fill="#101020"/>
<path d="M78.8 65 L84.2 65 L85.5 71 L79 71 Z" fill="#b8d8f8" stroke="#8898b0" stroke-width="0.8"/>
<path d="M76.5 73 L80 71 L86.5 71 L89.8 73.5 L89.8 78.5 L87.5 80.8 L79 80.8 L76.3 78.2 Z" fill="#cfcfd0" stroke="#6e6e74" stroke-width="0.9"/>
<path d="M77.5 74.8 L88.8 74.8 M77.5 77.6 L88.6 77.6" stroke="#f8f8f8" stroke-width="1"/><rect x="87.2" y="75" width="1.2" height="1.2" fill="#40b040"/>
<rect x="98.0" y="62" width="1" height="24" fill="#707076"/><rect x="99.0" y="62" width="1" height="24" fill="#fafafa"/>
<rect x="130.0" y="62" width="1" height="24" fill="#707076"/><rect x="131.0" y="62" width="1" height="24" fill="#fafafa"/>
<rect x="186.0" y="62" width="1" height="24" fill="#707076"/><rect x="187.0" y="62" width="1" height="24" fill="#fafafa"/>
<rect x="109.5" y="65.5" width="10" height="8" fill="#f2f4f8" stroke="#2a4690" stroke-width="1"/><rect x="109" y="65" width="11" height="2" fill="#2a4690"/>
<rect x="107.5" y="68.5" width="10" height="8" fill="#e8ecf4" stroke="#2a4690" stroke-width="1"/><rect x="107" y="68" width="11" height="2" fill="#2a4690"/>
<ellipse cx="112" cy="77.4" rx="3.6" ry="2.5" fill="none" stroke="#6c80a8" stroke-width="2"/><ellipse cx="118.6" cy="77.4" rx="3.6" ry="2.5" fill="none" stroke="#6c80a8" stroke-width="2"/>
<ellipse cx="112" cy="77.4" rx="3.6" ry="2.5" fill="none" stroke="#e4ecf8" stroke-width="0.7"/><ellipse cx="118.6" cy="77.4" rx="3.6" ry="2.5" fill="none" stroke="#e4ecf8" stroke-width="0.7"/>
<path d="M111.5 77.6 L119 77.6" stroke="#1a2a50" stroke-width="1.3"/>
<rect x="142.7" y="65.7" width="8.6" height="13.6" fill="url(#cbg)" stroke="#2c3880" stroke-width="1.2"/>
<rect x="159" y="62" width="23" height="23" fill="#ffffff"/>
<rect x="159" y="62" width="23" height="1" fill="#8a8a8e"/><rect x="159" y="62" width="1" height="23" fill="#8a8a8e"/>
<rect x="161" y="64" width="21" height="21" fill="#a9a9ac"/>
<rect x="163.6" y="65.4" width="14" height="14" fill="#f2f6fc" stroke="#26347c" stroke-width="1.3"/>
<rect x="164.8" y="68" width="5.2" height="3.8" fill="#e85c5c"/><rect x="172" y="69" width="4" height="1.5" fill="#101010"/>
<rect x="164.8" y="74" width="5.2" height="3.8" fill="#5c5ce8"/><rect x="172" y="75" width="4" height="1.5" fill="#101010"/>
<path d="M200.5 66.3 L200.5 78.3 L203.3 75.6 L205.6 80.5 L207.4 79.6 L205.2 74.8 L208.8 74.8 Z" fill="#fff" stroke="#000" stroke-width="1"/>
<rect x="219.5" y="65.3" width="15" height="15.2" fill="url(#peg)" stroke="#58585e" stroke-width="1"/>
<rect x="220" y="65.8" width="14" height="1.8" fill="#8cbce4"/><rect x="220" y="67.6" width="14" height="0.8" fill="#58585e"/>
<rect x="227.5" y="68.4" width="6.5" height="11.6" fill="#d4d4d6"/><rect x="227" y="68.4" width="1" height="12" fill="#58585e"/>
<rect x="229.3" y="70.8" width="3.6" height="1.3" fill="#101010"/><rect x="229.3" y="73.6" width="3.6" height="1.3" fill="#101010"/><rect x="229.3" y="76.4" width="3.6" height="1.3" fill="#101010"/>
</g>
<defs><clipPath id="clip573"><rect x="572" y="90" width="560" height="421"/></clipPath></defs>
<g clip-path="url(#clip573)">
<rect x="644" y="130" width="435" height="319" fill="#fff"/>
<path d="M753.5 135 L753.5 444" stroke="#dfdfdf" stroke-width="1" shape-rendering="crispEdges"/>
<path d="M862.5 135 L862.5 444" stroke="#dfdfdf" stroke-width="1" shape-rendering="crispEdges"/>
<path d="M970.5 135 L970.5 444" stroke="#dfdfdf" stroke-width="1" shape-rendering="crispEdges"/>
<path d="M650 384.5 L1074 384.5" stroke="#dfdfdf" stroke-width="1" shape-rendering="crispEdges"/>
<path d="M650 321.5 L1074 321.5" stroke="#dfdfdf" stroke-width="1" shape-rendering="crispEdges"/>
<path d="M650 257.5 L1074 257.5" stroke="#dfdfdf" stroke-width="1" shape-rendering="crispEdges"/>
<path d="M650 194.5 L1074 194.5" stroke="#dfdfdf" stroke-width="1" shape-rendering="crispEdges"/>
<path d="M719.70 141.30 L722.20 141.30 L725.70 145.40 L720.30 149.70 L716.90 144.70 Z" fill="none" stroke="#0000ff" stroke-width="1.5" stroke-linejoin="round"/>
<path d="M734.75 178.60 L737.25 178.60 L740.75 182.70 L735.35 187.00 L731.95 182.00 Z" fill="none" stroke="#0000ff" stroke-width="1.5" stroke-linejoin="round"/>
<path d="M749.80 205.00 L752.30 205.00 L755.80 209.10 L750.40 213.40 L747.00 208.40 Z" fill="none" stroke="#0000ff" stroke-width="1.5" stroke-linejoin="round"/>
<path d="M764.85 241.40 L767.35 241.40 L770.85 245.50 L765.45 249.80 L762.05 244.80 Z" fill="none" stroke="#0000ff" stroke-width="1.5" stroke-linejoin="round"/>
<path d="M779.90 270.30 L782.40 270.30 L785.90 274.40 L780.50 278.70 L777.10 273.70 Z" fill="none" stroke="#0000ff" stroke-width="1.5" stroke-linejoin="round"/>
<path d="M794.95 306.20 L797.45 306.20 L800.95 310.30 L795.55 314.60 L792.15 309.60 Z" fill="none" stroke="#0000ff" stroke-width="1.5" stroke-linejoin="round"/>
<path d="M810.00 336.40 L812.50 336.40 L816.00 340.50 L810.60 344.80 L807.20 339.80 Z" fill="none" stroke="#0000ff" stroke-width="1.5" stroke-linejoin="round"/>
<path d="M825.05 368.50 L827.55 368.50 L831.05 372.60 L825.65 376.90 L822.25 371.90 Z" fill="none" stroke="#0000ff" stroke-width="1.5" stroke-linejoin="round"/>
<path d="M840.10 392.30 L842.60 392.30 L846.10 396.40 L840.70 400.70 L837.30 395.70 Z" fill="none" stroke="#0000ff" stroke-width="1.5" stroke-linejoin="round"/>
<path d="M855.15 404.00 L857.65 404.00 L861.15 408.10 L855.75 412.40 L852.35 407.40 Z" fill="none" stroke="#0000ff" stroke-width="1.5" stroke-linejoin="round"/>
<path d="M870.20 407.50 L872.70 407.50 L876.20 411.60 L870.80 415.90 L867.40 410.90 Z" fill="none" stroke="#0000ff" stroke-width="1.5" stroke-linejoin="round"/>
<path d="M885.25 405.50 L887.75 405.50 L891.25 409.60 L885.85 413.90 L882.45 408.90 Z" fill="none" stroke="#0000ff" stroke-width="1.5" stroke-linejoin="round"/>
<path d="M900.30 401.20 L902.80 401.20 L906.30 405.30 L900.90 409.60 L897.50 404.60 Z" fill="none" stroke="#0000ff" stroke-width="1.5" stroke-linejoin="round"/>
<path d="M915.35 377.90 L917.85 377.90 L921.35 382.00 L915.95 386.30 L912.55 381.30 Z" fill="none" stroke="#0000ff" stroke-width="1.5" stroke-linejoin="round"/>
<path d="M930.40 352.70 L932.90 352.70 L936.40 356.80 L931.00 361.10 L927.60 356.10 Z" fill="none" stroke="#0000ff" stroke-width="1.5" stroke-linejoin="round"/>
<path d="M945.45 321.30 L947.95 321.30 L951.45 325.40 L946.05 329.70 L942.65 324.70 Z" fill="none" stroke="#0000ff" stroke-width="1.5" stroke-linejoin="round"/>
<path d="M960.50 291.90 L963.00 291.90 L966.50 296.00 L961.10 300.30 L957.70 295.30 Z" fill="none" stroke="#0000ff" stroke-width="1.5" stroke-linejoin="round"/>
<path d="M975.55 260.10 L978.05 260.10 L981.55 264.20 L976.15 268.50 L972.75 263.50 Z" fill="none" stroke="#0000ff" stroke-width="1.5" stroke-linejoin="round"/>
<path d="M990.60 222.50 L993.10 222.50 L996.60 226.60 L991.20 230.90 L987.80 225.90 Z" fill="none" stroke="#0000ff" stroke-width="1.5" stroke-linejoin="round"/>
<path d="M1005.65 194.80 L1008.15 194.80 L1011.65 198.90 L1006.25 203.20 L1002.85 198.20 Z" fill="none" stroke="#0000ff" stroke-width="1.5" stroke-linejoin="round"/>
<path d="M720.80 147.13 L723.31 152.62 L725.82 158.10 L728.32 163.58 L730.83 169.05 L733.34 174.51 L735.85 179.97 L738.36 185.41 L740.87 190.85 L743.38 196.28 L745.88 201.70 L748.39 207.12 L750.90 212.52 L753.41 217.91 L755.92 223.29 L758.42 228.66 L760.93 234.01 L763.44 239.35 L765.95 244.68 L768.46 249.99 L770.97 255.29 L773.47 260.57 L775.98 265.83 L778.49 271.07 L781.00 276.29 L783.51 281.49 L786.02 286.67 L788.52 291.82 L791.03 296.94 L793.54 302.04 L796.05 307.10 L798.56 312.13 L801.07 317.13 L803.57 322.08 L806.08 327.00 L808.59 331.86 L811.10 336.68 L813.61 341.45 L816.12 346.15 L818.62 350.80 L821.13 355.37 L823.64 359.87 L826.15 364.29 L828.66 368.62 L831.17 372.85 L833.67 376.97 L836.18 380.98 L838.69 384.85 L841.20 388.59 L843.71 392.17 L846.22 395.59 L848.72 398.82 L851.23 401.85 L853.74 404.66 L856.25 407.24 L858.76 409.57 L861.27 411.63 L863.77 413.41 L866.28 414.88 L868.79 416.03 L871.30 416.86 L873.81 417.35 L876.32 417.50 L878.83 417.31 L881.33 416.77 L883.84 415.90 L886.35 414.71 L888.86 413.20 L891.37 411.39 L893.88 409.29 L896.38 406.93 L898.89 404.32 L901.40 401.47 L903.91 398.41 L906.42 395.16 L908.92 391.72 L911.43 388.12 L913.94 384.36 L916.45 380.47 L918.96 376.45 L921.47 372.31 L923.97 368.07 L926.48 363.73 L928.99 359.30 L931.50 354.79 L934.01 350.21 L936.52 345.56 L939.02 340.84 L941.53 336.07 L944.04 331.24 L946.55 326.37 L949.06 321.45 L951.57 316.49 L954.08 311.49 L956.58 306.46 L959.09 301.39 L961.60 296.29 L964.11 291.16 L966.62 286.01 L969.12 280.83 L971.63 275.63 L974.14 270.40 L976.65 265.16 L979.16 259.89 L981.67 254.61 L984.17 249.31 L986.68 244.00 L989.19 238.67 L991.70 233.33 L994.21 227.97 L996.72 222.60 L999.23 217.22 L1001.73 211.83 L1004.24 206.42 L1006.75 201.01 L1009.26 195.59 L1011.77 190.16 L1014.27 184.72 L1016.78 179.27 L1019.29 173.81 L1021.80 168.35" fill="none" stroke="#0072bd" stroke-width="2.8" stroke-linejoin="round"/>
<path d="M645.5 130.5 L1078.5 130.5 L1078.5 448.5 L645.5 448.5 Z" fill="none" stroke="#262626" stroke-width="1" shape-rendering="crispEdges"/>
<path d="M645.5 448 L645.5 444 M645.5 131 L645.5 135" stroke="#262626" stroke-width="1" shape-rendering="crispEdges"/>
<path d="M753.5 448 L753.5 444 M753.5 131 L753.5 135" stroke="#262626" stroke-width="1" shape-rendering="crispEdges"/>
<path d="M862.5 448 L862.5 444 M862.5 131 L862.5 135" stroke="#262626" stroke-width="1" shape-rendering="crispEdges"/>
<path d="M970.5 448 L970.5 444 M970.5 131 L970.5 135" stroke="#262626" stroke-width="1" shape-rendering="crispEdges"/>
<path d="M1078.5 448 L1078.5 444 M1078.5 131 L1078.5 135" stroke="#262626" stroke-width="1" shape-rendering="crispEdges"/>
<path d="M646 448.5 L650 448.5 M1078 448.5 L1074 448.5" stroke="#262626" stroke-width="1" shape-rendering="crispEdges"/>
<path d="M646 384.5 L650 384.5 M1078 384.5 L1074 384.5" stroke="#262626" stroke-width="1" shape-rendering="crispEdges"/>
<path d="M646 321.5 L650 321.5 M1078 321.5 L1074 321.5" stroke="#262626" stroke-width="1" shape-rendering="crispEdges"/>
<path d="M646 257.5 L650 257.5 M1078 257.5 L1074 257.5" stroke="#262626" stroke-width="1" shape-rendering="crispEdges"/>
<path d="M646 194.5 L650 194.5 M1078 194.5 L1074 194.5" stroke="#262626" stroke-width="1" shape-rendering="crispEdges"/>
<path d="M646 130.5 L650 130.5 M1078 130.5 L1074 130.5" stroke="#262626" stroke-width="1" shape-rendering="crispEdges"/>
<text x="645.0" y="473" font-family='"Liberation Sans", sans-serif' font-size="18.3" font-weight="normal" text-anchor="middle" fill="#262626" textLength="30" lengthAdjust="spacingAndGlyphs" >-20</text>
<text x="753.2" y="473" font-family='"Liberation Sans", sans-serif' font-size="18.3" font-weight="normal" text-anchor="middle" fill="#262626" textLength="30" lengthAdjust="spacingAndGlyphs" >-15</text>
<text x="861.5" y="473" font-family='"Liberation Sans", sans-serif' font-size="18.3" font-weight="normal" text-anchor="middle" fill="#262626" textLength="30" lengthAdjust="spacingAndGlyphs" >-10</text>
<text x="969.8" y="473" font-family='"Liberation Sans", sans-serif' font-size="18.3" font-weight="normal" text-anchor="middle" fill="#262626" textLength="18" lengthAdjust="spacingAndGlyphs" >-5</text>
<text x="1078.0" y="473" font-family='"Liberation Sans", sans-serif' font-size="18.3" font-weight="normal" text-anchor="middle" fill="#262626" textLength="12" lengthAdjust="spacingAndGlyphs" >0</text>
<text x="638.5" y="454.5" font-family='"Liberation Sans", sans-serif' font-size="18.3" font-weight="normal" text-anchor="end" fill="#262626" textLength="30.5" lengthAdjust="spacingAndGlyphs" >0.1</text>
<text x="638.5" y="390.9" font-family='"Liberation Sans", sans-serif' font-size="18.3" font-weight="normal" text-anchor="end" fill="#262626" textLength="30.5" lengthAdjust="spacingAndGlyphs" >0.2</text>
<text x="638.5" y="327.3" font-family='"Liberation Sans", sans-serif' font-size="18.3" font-weight="normal" text-anchor="end" fill="#262626" textLength="30.5" lengthAdjust="spacingAndGlyphs" >0.3</text>
<text x="638.5" y="263.7" font-family='"Liberation Sans", sans-serif' font-size="18.3" font-weight="normal" text-anchor="end" fill="#262626" textLength="30.5" lengthAdjust="spacingAndGlyphs" >0.4</text>
<text x="638.5" y="200.1" font-family='"Liberation Sans", sans-serif' font-size="18.3" font-weight="normal" text-anchor="end" fill="#262626" textLength="30.5" lengthAdjust="spacingAndGlyphs" >0.5</text>
<text x="638.5" y="136.5" font-family='"Liberation Sans", sans-serif' font-size="18.3" font-weight="normal" text-anchor="end" fill="#262626" textLength="30.5" lengthAdjust="spacingAndGlyphs" >0.6</text>
<rect x="978.5" y="140.5" width="89" height="43" fill="#fff" stroke="#262626" stroke-width="1" shape-rendering="crispEdges"/>
<path d="M1000.30 147.70 L1002.80 147.70 L1006.30 151.80 L1000.90 156.10 L997.50 151.10 Z" fill="none" stroke="#0000ff" stroke-width="1.5" stroke-linejoin="round"/>
<path d="M981 172.5 L1021.5 172.5" stroke="#0072bd" stroke-width="3"/>
<text x="1023.5" y="157.7" font-family='"Liberation Sans", sans-serif' font-size="17.5" font-weight="normal" text-anchor="start" fill="#000" textLength="39.5" lengthAdjust="spacingAndGlyphs" >Data</text>
<text x="1023.5" y="177.9" font-family='"Liberation Sans", sans-serif' font-size="17.5" font-weight="normal" text-anchor="start" fill="#000" textLength="20.5" lengthAdjust="spacingAndGlyphs" >Fit</text>
<text x="585.2" y="111.5" font-family='"Liberation Sans", sans-serif' font-size="20.5" font-weight="bold" text-anchor="start" fill="#000" textLength="131" lengthAdjust="spacingAndGlyphs" >Normalized</text>
<text x="736.4" y="111.5" font-family='"Liberation Sans", sans-serif' font-size="20.5" font-weight="bold" text-anchor="start" fill="#000" textLength="117" lengthAdjust="spacingAndGlyphs" >Emittance</text>
<text x="860.2" y="111.5" font-family='"Liberation Sans", sans-serif' font-size="20.5" font-weight="bold" text-anchor="start" fill="#000" textLength="16" lengthAdjust="spacingAndGlyphs" >X</text>
<text x="874.6" y="121.5" font-family='"Liberation Sans", sans-serif' font-size="16.5" font-weight="bold" text-anchor="start" fill="#000" textLength="37" lengthAdjust="spacingAndGlyphs" >rms</text>
<text x="926.6" y="111.5" font-family='"Liberation Sans", sans-serif' font-size="20.5" font-weight="bold" text-anchor="start" fill="#000" textLength="16" lengthAdjust="spacingAndGlyphs" >=</text>
<text x="949.2" y="111.5" font-family='"Liberation Sans", sans-serif' font-size="20.5" font-weight="bold" text-anchor="start" fill="#000" textLength="50" lengthAdjust="spacingAndGlyphs" >1.55</text>
<text x="1008.4" y="111.5" font-family='"Liberation Serif", serif' font-size="20" font-weight="normal" text-anchor="start" fill="#000" textLength="11" lengthAdjust="spacingAndGlyphs" font-style="italic">π</text>
<rect x="1023.4" y="103.5" width="2" height="2" fill="#000"/>
<text x="1027.4" y="111.5" font-family='"Liberation Sans", sans-serif' font-size="20.5" font-weight="bold" text-anchor="start" fill="#000" textLength="44" lengthAdjust="spacingAndGlyphs" >mm</text>
<rect x="1073.4" y="103.5" width="2" height="2" fill="#000"/>
<text x="1078.3" y="111.5" font-family='"Liberation Sans", sans-serif' font-size="20.5" font-weight="bold" text-anchor="start" fill="#000" textLength="59" lengthAdjust="spacingAndGlyphs" >mrad</text>
<text x="818.1" y="505.4" font-family='"Liberation Sans", sans-serif' font-size="20" font-weight="normal" text-anchor="start" fill="#262626" textLength="66" lengthAdjust="spacingAndGlyphs" >K (1/m</text>
<text x="886.5" y="495.3" font-family='"Liberation Sans", sans-serif' font-size="14.5" font-weight="normal" text-anchor="start" fill="#262626" textLength="9" lengthAdjust="spacingAndGlyphs" >2</text>
<text x="896.5" y="505.4" font-family='"Liberation Sans", sans-serif' font-size="20.5" font-weight="normal" text-anchor="start" fill="#262626" textLength="8" lengthAdjust="spacingAndGlyphs" >)</text>
<g transform="translate(591.4,357.3) rotate(-90)">
<text x="0" y="0" font-family='"Liberation Sans", sans-serif' font-size="20" font-weight="normal" text-anchor="start" fill="#262626" textLength="15.5" lengthAdjust="spacingAndGlyphs" >Δ</text>
<text x="20.5" y="0" font-family='"Liberation Sans", sans-serif' font-size="20" font-weight="normal" text-anchor="start" fill="#262626" textLength="13.5" lengthAdjust="spacingAndGlyphs" >X</text>
<text x="36.2" y="10" font-family='"Liberation Sans", sans-serif' font-size="16.5" font-weight="normal" text-anchor="start" fill="#262626" textLength="30.5" lengthAdjust="spacingAndGlyphs" >rms</text>
<text x="81.5" y="0" font-family='"Liberation Sans", sans-serif' font-size="20.5" font-weight="normal" text-anchor="start" fill="#262626" textLength="53" lengthAdjust="spacingAndGlyphs" >(mm)</text>
</g>
</g>
</svg></body></html>
